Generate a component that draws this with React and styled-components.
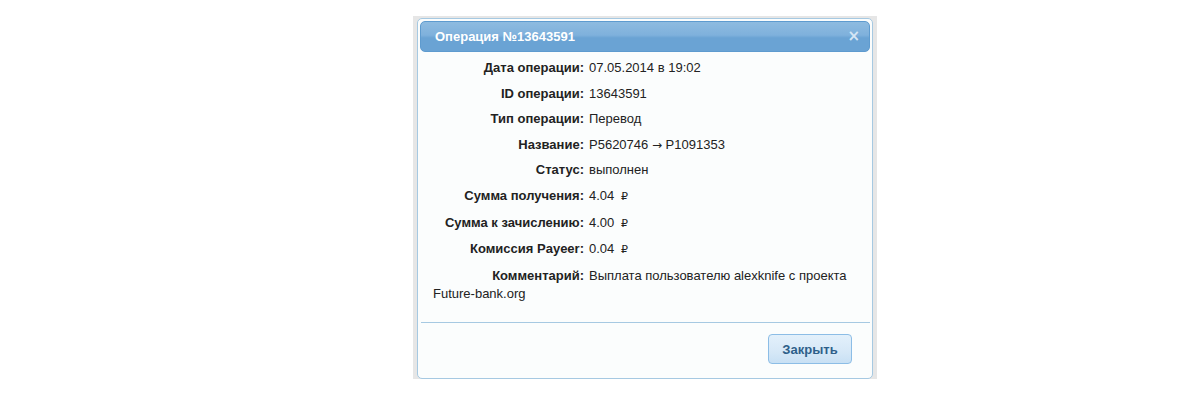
import React from 'react';
import styled, { createGlobalStyle } from 'styled-components';

const Global = createGlobalStyle`
  html, body { margin: 0; padding: 0; background: #fff; }
  body { font-family: "Liberation Sans", Arial, sans-serif; }
`

const Page = styled.div`
  width: 1190px;
  height: 418px;
  padding: 16px 0 0 413px;
  box-sizing: border-box;
`
const Frame = styled.div`
  width: 464px;
  padding: 2px 4px 0 4px;
  box-sizing: border-box;
  background: #e6e6e6;
`
const Dialog = styled.div`
  width: 456px;
  height: 361px;
  box-sizing: border-box;
  background: #fbfdfd;
  border: 1px solid #a6c9e2;
  border-radius: 5px;
  padding: 2px;
  display: flex;
  flex-direction: column;
`
const Header = styled.div`
  height: 31px;
  box-sizing: border-box;
  border: 1px solid #5e9bcf;
  border-radius: 5px;
  background: linear-gradient(to bottom, #8ebbe0 0%, #7fb1dc 45%, #6aa3d4 55%, #6aa3d4 100%);
  display: flex;
  align-items: center;
  justify-content: space-between;
  padding: 0 9px 0 14px;
`
const Title = styled.span`
  color: #fff;
  font-weight: bold;
  font-size: 13px;
`
const Close = styled.span`
  color: #d6e6f4;
  font-family: "DejaVu Sans", sans-serif;
  font-weight: bold;
  font-size: 15px;
  line-height: 1;
`
const Body = styled.div`
  flex: 1;
  padding: 7px 12px 0 13px;
  font-size: 13px;
  color: #222;
`
const Row = styled.div`
  line-height: 18px;
  margin-bottom: 7.6px;
`
const Label = styled.span`
  display: inline-block;
  width: 151px;
  text-align: right;
  font-weight: bold;
  margin-right: 5px;
`
const Arrow = styled.span`
  font-family: "DejaVu Sans", sans-serif;
  font-size: 12px;
`
const Rub = styled.span`
  font-family: "DejaVu Sans", sans-serif;
  font-size: 11px;
  margin-left: 3px;
`
const Footer = styled.div`
  border-top: 1px solid #a6c9e2;
  margin: 0 0 0 1px;
  height: 42px;
  display: flex;
  justify-content: flex-end;
  align-items: flex-start;
  padding: 11px 18px 0 0;
`
const Button = styled.button`
  width: 84px;
  height: 30px;
  border: 1px solid #8cbde6;
  border-radius: 4px;
  background: linear-gradient(to bottom, #e3f0fb 0%, #d6e8f7 60%, #c8e0f4 100%);
  color: #2e5f8a;
  font-family: "Liberation Sans", Arial, sans-serif;
  font-weight: bold;
  font-size: 13px;
  padding: 0;
`

const rows = [
  ['Дата операции:', '07.05.2014 в 19:02'],
  ['ID операции:', '13643591'],
  ['Тип операции:', 'Перевод'],
  ['Название:', <>P5620746 <Arrow>→</Arrow> P1091353</>],
  ['Статус:', 'выполнен'],
  ['Сумма получения:', <>4.04 <Rub>₽</Rub></>],
  ['Сумма к зачислению:', <>4.00 <Rub>₽</Rub></>],
  ['Комиссия Payeer:', <>0.04 <Rub>₽</Rub></>],
  ['Комментарий:', 'Выплата пользователю alexknife с проекта Future-bank.org'],
];

export default function App() {
  return (
    <Page>
      <Global />
      <Frame>
        <Dialog>
          <Header>
            <Title>Операция №13643591</Title>
            <Close>×</Close>
          </Header>
          <Body>
            {rows.map(([l, v]) => (
              <Row key={l}>
                <Label>{l}</Label>{v}
              </Row>
            ))}
          </Body>
          <Footer>
            <Button>Закрыть</Button>
          </Footer>
        </Dialog>
      </Frame>
    </Page>
  );
}
